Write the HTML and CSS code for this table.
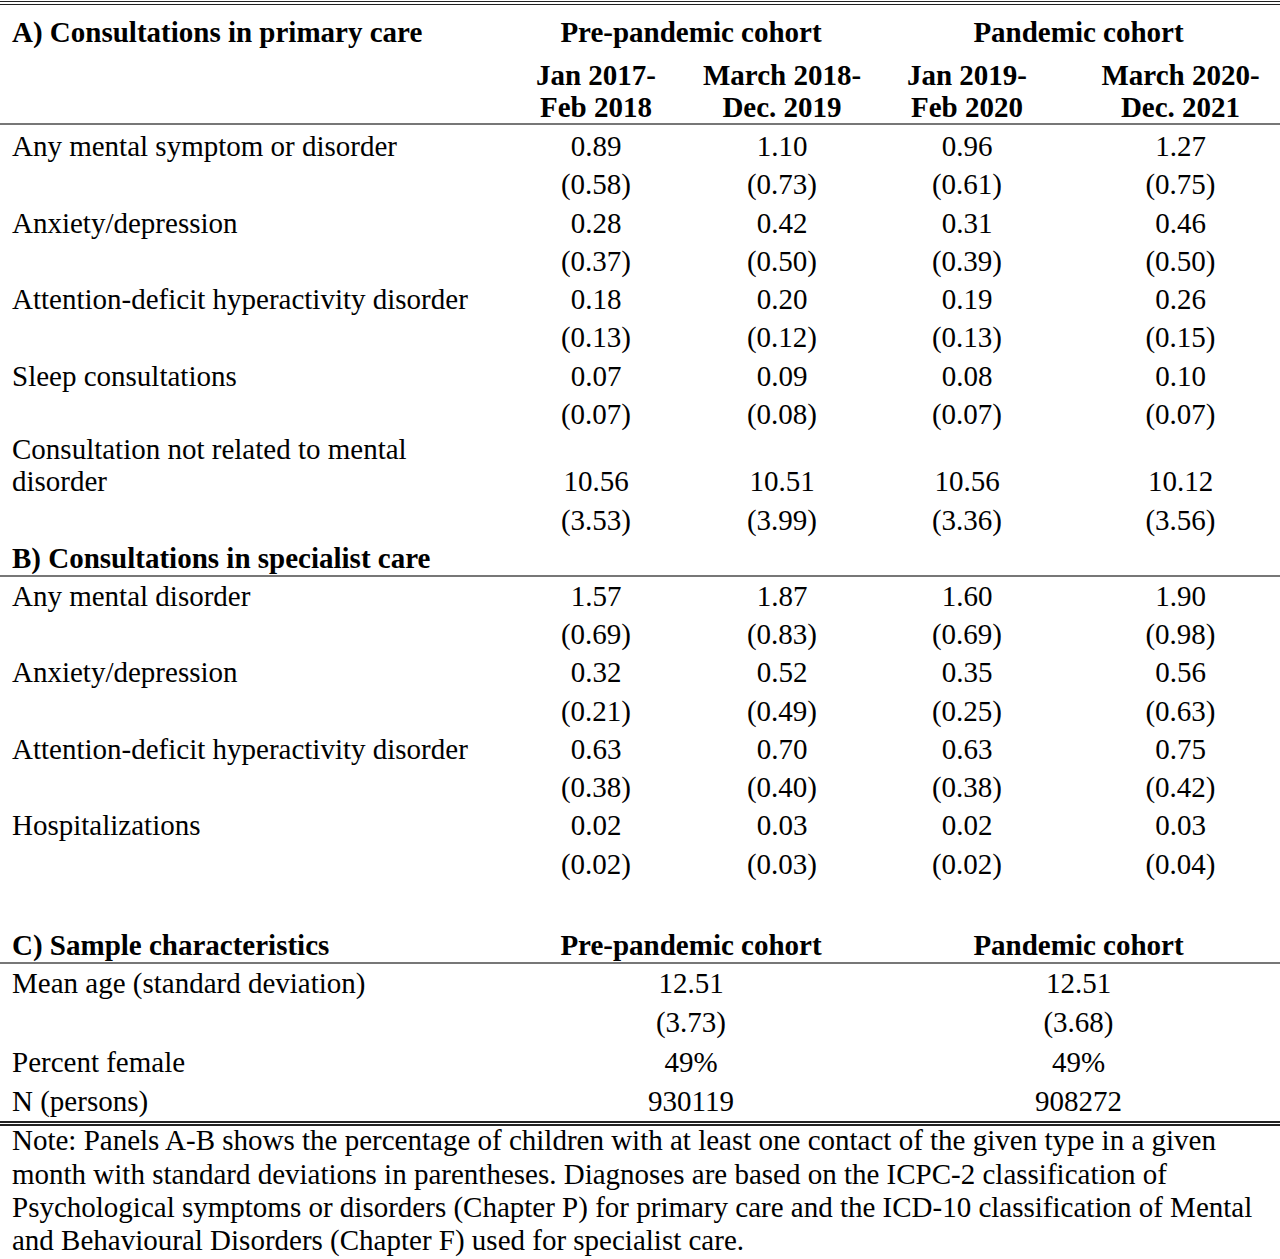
FILE: index.html
```html
<!DOCTYPE html>
<html lang="en">
<head>
    <meta charset="UTF-8">
    <meta name="viewport" content="width=device-width, initial-scale=1.0">
    <title>Mental health consultations by cohort</title>
    <link rel="stylesheet" href="styles.css">
</head>
<body>

    <table class="results">
        <colgroup>
            <col class="col-label">
            <col class="col-1">
            <col class="col-2">
            <col class="col-3">
            <col class="col-4">
        </colgroup>
        <thead>
            <tr class="head-top">
                <th class="label">A) Consultations in primary care</th>
                <th colspan="2">Pre-pandemic cohort</th>
                <th colspan="2">Pandemic cohort</th>
            </tr>
            <tr class="head-periods">
                <th></th>
                <th>Jan 2017-<br>Feb 2018</th>
                <th>March 2018-<br>Dec. 2019</th>
                <th>Jan 2019-<br>Feb 2020</th>
                <th class="last">March 2020-<br>Dec. 2021</th>
            </tr>
        </thead>
        <tbody>
            <tr class="after-rule"><td class="label">Any mental symptom or disorder</td><td>0.89</td><td>1.10</td><td>0.96</td><td class="last">1.27</td></tr>
            <tr><td></td><td>(0.58)</td><td>(0.73)</td><td>(0.61)</td><td class="last">(0.75)</td></tr>
            <tr><td class="label">Anxiety/depression</td><td>0.28</td><td>0.42</td><td>0.31</td><td class="last">0.46</td></tr>
            <tr><td></td><td>(0.37)</td><td>(0.50)</td><td>(0.39)</td><td class="last">(0.50)</td></tr>
            <tr><td class="label">Attention-deficit hyperactivity disorder</td><td>0.18</td><td>0.20</td><td>0.19</td><td class="last">0.26</td></tr>
            <tr><td></td><td>(0.13)</td><td>(0.12)</td><td>(0.13)</td><td class="last">(0.15)</td></tr>
            <tr><td class="label">Sleep consultations</td><td>0.07</td><td>0.09</td><td>0.08</td><td class="last">0.10</td></tr>
            <tr><td></td><td>(0.07)</td><td>(0.08)</td><td>(0.07)</td><td class="last">(0.07)</td></tr>
            <tr class="wrap"><td class="label">Consultation not related to mental<br>disorder</td><td>10.56</td><td>10.51</td><td>10.56</td><td class="last">10.12</td></tr>
            <tr><td></td><td>(3.53)</td><td>(3.99)</td><td>(3.36)</td><td class="last">(3.56)</td></tr>

            <tr class="panel"><th class="label">B) Consultations in specialist care</th><th></th><th></th><th></th><th></th></tr>
            <tr><td class="label">Any mental disorder</td><td>1.57</td><td>1.87</td><td>1.60</td><td class="last">1.90</td></tr>
            <tr><td></td><td>(0.69)</td><td>(0.83)</td><td>(0.69)</td><td class="last">(0.98)</td></tr>
            <tr><td class="label">Anxiety/depression</td><td>0.32</td><td>0.52</td><td>0.35</td><td class="last">0.56</td></tr>
            <tr><td></td><td>(0.21)</td><td>(0.49)</td><td>(0.25)</td><td class="last">(0.63)</td></tr>
            <tr><td class="label">Attention-deficit hyperactivity disorder</td><td>0.63</td><td>0.70</td><td>0.63</td><td class="last">0.75</td></tr>
            <tr><td></td><td>(0.38)</td><td>(0.40)</td><td>(0.38)</td><td class="last">(0.42)</td></tr>
            <tr><td class="label">Hospitalizations</td><td>0.02</td><td>0.03</td><td>0.02</td><td class="last">0.03</td></tr>
            <tr><td></td><td>(0.02)</td><td>(0.03)</td><td>(0.02)</td><td class="last">(0.04)</td></tr>
            <tr class="spacer"><td colspan="5"></td></tr>

            <tr class="panel"><th class="label">C) Sample characteristics</th><th colspan="2">Pre-pandemic cohort</th><th colspan="2">Pandemic cohort</th></tr>
            <tr class="sample"><td class="label">Mean age (standard deviation)</td><td colspan="2">12.51</td><td colspan="2">12.51</td></tr>
            <tr class="sample"><td></td><td colspan="2">(3.73)</td><td colspan="2">(3.68)</td></tr>
            <tr class="sample"><td class="label">Percent female</td><td colspan="2">49%</td><td colspan="2">49%</td></tr>
            <tr class="sample last-row"><td class="label">N (persons)</td><td colspan="2">930119</td><td colspan="2">908272</td></tr>
        </tbody>
    </table>

    <p class="note">
        Note: Panels A-B shows the percentage of children with at least one contact of the given type in a given<br>
        month with standard deviations in parentheses. Diagnoses are based on the ICPC-2 classification of<br>
        Psychological symptoms or disorders (Chapter P) for primary care and the ICD-10 classification of Mental<br>
        and Behavioural Disorders (Chapter F) used for specialist care.
    </p>

</body>
</html>
```

FILE: styles.css
```css
body {
    font-family: "Liberation Serif", "Times New Roman", serif;
    font-size: 29px;
    margin: 0;
    padding: 1px 0 0;
    background-color: #fff;
    color: #000;
}


.results {
    width: 1280px;
    table-layout: fixed;
    border-collapse: collapse;
    border-top: 4px double #222;
}

.col-label { width: 505px; }
.col-1 { width: 182px; }
.col-2 { width: 190px; }
.col-3 { width: 180px; }
.col-4 { width: 223px; }

.results th,
.results td {
    padding: 0;
    text-align: center;
    vertical-align: bottom;
    font-weight: normal;
    line-height: 38.3px;
    white-space: nowrap;
}

.results th {
    font-weight: bold;
}

.results .label {
    text-align: left;
    padding-left: 12px;
}

.results .last {
    padding-left: 24px;
}


.head-top th {
    line-height: 32px;
    padding: 11px 0;
}

.head-periods th {
    line-height: 32px;
    border-bottom: 2px solid #777;
}

.results .after-rule td {
    padding-top: 2px;
}

.results .wrap td {
    line-height: 32px;
    padding-bottom: 4px;
}

.results .panel th {
    line-height: 34px;
    padding-top: 1px;
    border-bottom: 2px solid #777;
}

.spacer td {
    height: 44px;
}

.results .sample td {
    line-height: 39.3px;
}

.results .last-row td {
    border-bottom: 5px double #222;
}


.note {
    margin: -2px 0 0;
    padding: 0 12px;
    line-height: 33.3px;
}
```
